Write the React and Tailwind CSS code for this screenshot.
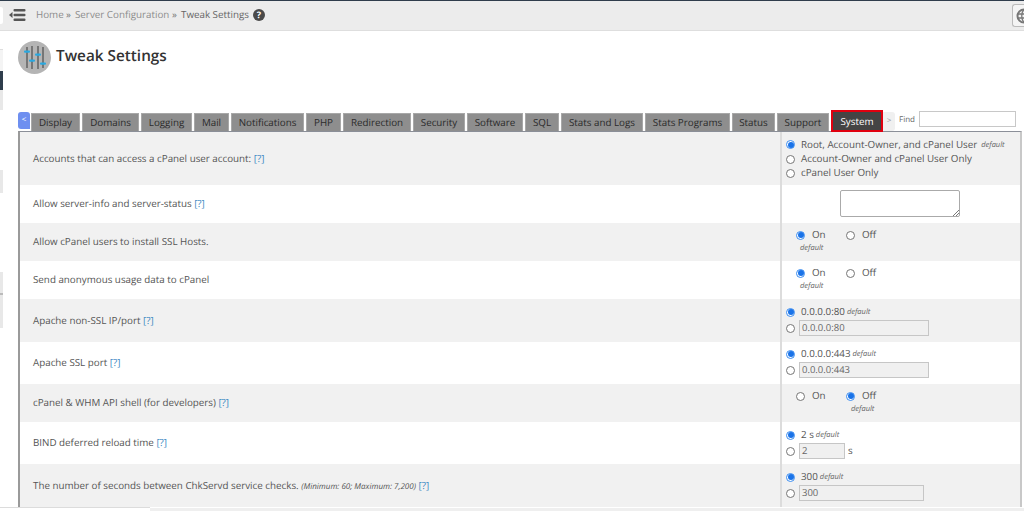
const font = { fontFamily: '"Open Sans", sans-serif' };

const tabs = [
  ["Display", "w-[49px]"],
  ["Domains", "w-[57px]"],
  ["Logging", "w-[51px]"],
  ["Mail", "w-[35px]"],
  ["Notifications", "w-[73px]"],
  ["PHP", "w-[35px]"],
  ["Redirection", "w-[68px]"],
  ["Security", "w-[52px]"],
  ["Software", "w-[56px]"],
  ["SQL", "w-[34px]"],
  ["Stats and Logs", "w-[82px]"],
  ["Stats Programs", "w-[85px]"],
  ["Status", "w-[43px]"],
  ["Support", "w-[52px]"],
];

function Radio({ on }) {
  return on ? (
    <span className="w-[9px] h-[9px] rounded-full shrink-0 border border-[#3b8df0] bg-white flex items-center justify-center">
      <span className="w-[6px] h-[6px] rounded-full bg-[#1a73e8]" />
    </span>
  ) : (
    <span className="w-[9px] h-[9px] rounded-full shrink-0 border border-[#767676] bg-white" />
  );
}

function Def({ className = "" }) {
  return <span className={`text-[7.5px] italic text-[#666] ${className}`}>default</span>;
}

function Help() {
  return <span className="text-[#3f8ac4]">[?]</span>;
}

function Row({ h, gray, label, children }) {
  return (
    <div className={`flex ${h} ${gray ? "bg-[#f1f1f1]" : "bg-white"}`}>
      <div className="w-[760px] pl-[13px] pt-px flex items-center text-[9.8px] text-[#555]">{label}</div>
      <div className="flex-1 border-l-2 border-[#dcdcdc]">{children}</div>
    </div>
  );
}

function OnOff({ off }) {
  return (
    <div className="pt-[5px] pl-[14px]">
      <div className="flex items-center h-[14px] text-[9.8px] text-[#555]">
        <Radio on={!off} />
        <span className="ml-[7px] w-[34px]">On</span>
        <Radio on={off} />
        <span className="ml-[7px]">Off</span>
      </div>
      <div className={`flex text-[7.5px] leading-[12px] ${off ? "pl-[55px]" : "pl-[4px]"}`}>
        <Def />
      </div>
    </div>
  );
}

function ValueInput({ value, width, suffix, unit, top = "pt-[6px]" }) {
  return (
    <div className={`pl-[4px] ${top} text-[9.8px] text-[#555]`}>
      <div className="flex items-center h-[14px]">
        <Radio on />
        <span className="ml-[6px]">{value}{suffix}</span>
        <Def className="ml-[2px] mt-[1px]" />
      </div>
      <div className="flex items-center mt-[1px]">
        <Radio />
        <div className={`ml-[4px] ${width} h-[16px] border border-[#c6c6c6] bg-[#f0f0f0] text-[9.5px] leading-[14px] pl-[2px] text-[#666]`}>{value}</div>
        {unit && <span className="ml-[3px]">{unit}</span>}
      </div>
    </div>
  );
}

export default function App() {
  return (
    <div style={font} className="w-[1024px] h-[511px] overflow-hidden bg-white flex flex-col [text-rendering:geometricPrecision]">
      <div className="h-px bg-[#2f3d4c] shrink-0" />
      <header className="h-[30px] shrink-0 bg-[#ececec] border-b border-[#dedede] flex items-center relative">
        <div className="w-[3px] h-[17px] bg-white rounded-r-[2px] -mt-[1px]" />
        <svg width="17" height="14" viewBox="0 0 17 14" className="ml-[6px] -mt-[1px]" fill="#555">
          <path d="M0 7l3.5-3v6z" />
          <rect x="4.5" y="1" width="12" height="2.4" rx="1" />
          <rect x="4.5" y="5.8" width="12" height="2.4" rx="1" />
          <rect x="4.5" y="10.6" width="12" height="2.4" rx="1" />
        </svg>
        <div className="ml-[10px] text-[9.8px] text-[#8c8c8c] flex items-center -mt-[1px] whitespace-nowrap">
          <span className="w-[27px]">Home</span><span className="ml-[3px] w-[5px] text-[#777]">»</span>
          <span className="ml-[4px] w-[94px]">Server Configuration</span><span className="ml-[3px] w-[5px] text-[#777]">»</span>
          <span className="ml-[4px] w-[67px] text-[#666]">Tweak Settings</span>
          <span className="ml-[5px] w-[12px] h-[12px] rounded-full bg-[#4a4a4a] text-white text-[9px] font-bold leading-[12px] text-center">?</span>
        </div>
        <div className="absolute right-0 top-[3px] w-[12px] h-[23px] border border-r-0 border-[#bbb] rounded-l-[3px] bg-[#f4f4f4] overflow-hidden pl-[3px] pt-[3px]">
          <svg width="16" height="16" viewBox="0 0 16 16" fill="none" stroke="#777" strokeWidth="2">
            <circle cx="8" cy="8" r="6.5" />
            <path d="M1 6h14M1 10h14M8 1.5c-3 3-3 10 0 13M8 1.5c3 3 3 10 0 13" strokeWidth="1.3" />
          </svg>
        </div>
      </header>

      <div className="h-[476px] shrink-0 flex">
        <aside className="w-[3px] shrink-0 flex flex-col bg-white">
          <div className="h-[19px] bg-white border-b border-[#dedede]" />
          <div className="h-[21px] bg-[#f4f4f4]" />
          <div className="h-[19px] bg-[#2f3d4c]" />
          <div className="h-[20px] bg-[#e8e8e8]" />
          <div className="h-[60px]" />
          <div className="h-[23px] bg-[#e8e8e8]" />
          <div className="h-[79px]" />
          <div className="h-[21px] bg-[#e8e8e8]" />
          <div className="h-[2px] bg-[#bbb]" />
          <div className="h-[33px] bg-[#e8e8e8]" />
        </aside>

        <main className="flex-1 min-w-0 flex flex-col">
          <div className="h-[81px] shrink-0 pl-[15px] pt-[10px] flex items-start">
            <svg width="33" height="33" viewBox="0 0 33 33">
              <circle cx="16.5" cy="16.5" r="16.5" fill="#b4b4b4" />
              <g stroke="#5c5c5c" strokeWidth="1.4">
                <path d="M9 6v21M14 5v23M20 5v23M25 6v21" />
              </g>
              <g fill="#29a8e0">
                <rect x="6" y="9.5" width="6" height="2.2" rx="1" />
                <rect x="11" y="18.5" width="6" height="2.2" rx="1" />
                <rect x="17" y="12.5" width="6" height="2.2" rx="1" />
                <rect x="22" y="21.5" width="6" height="2.2" rx="1" />
              </g>
            </svg>
            <h1 className="ml-[5px] mt-[5px] text-[15.3px] leading-[20px] font-semibold text-[#333]">Tweak Settings</h1>
          </div>

          <div className="h-[19px] shrink-0 flex items-end pl-[15px] relative">
            <div className="w-[12px] h-[17px] mb-[2px] mr-px bg-[#6e8ff0] rounded-t-[3px] rounded-bl-[3px] text-white text-[8px] leading-[16px] text-center">&lt;</div>
            {tabs.map(([t, w]) => (
              <div key={t} className={`${w} h-[18px] mr-[2px] shrink-0 bg-[#8e8e8e] border-t border-x border-[#a8a8a8] text-[#2b2b2b] text-[9.8px] leading-[18px] text-center whitespace-nowrap`}>{t}</div>
            ))}
            <div className="absolute left-[828px] top-[-2px] w-[52px] h-[22px] bg-[#444] border-2 border-[#e0000f] text-white text-[9.8px] leading-[20px] text-center">System</div>
            <div className="absolute left-[880px] top-0 w-[12px] h-[19px] bg-[#f0f0f0] rounded-r-[3px] text-[#999] text-[8px] leading-[18px] text-center">&gt;</div>
            <span className="absolute left-[896px] top-px text-[8px] leading-[14px] text-[#666]">Find</span>
            <div className="absolute left-[916px] top-[-1px] w-[97px] h-[16px] bg-white border border-[#c8c8c8]" />
          </div>

          <div className="ml-[15px] mr-[2px] flex-1 min-h-0 flex flex-col border-l-2 border-r-2 border-t border-[#8b8f98] border-l-[#9a9a9a] border-r-[#c8c8c8]">
            <Row h="h-[53px]" gray label={<span>Accounts that can access a cPanel user account: <Help /></span>}>
              <div className="pl-[4px] pt-[5px] text-[9.8px] leading-[14px] text-[#555]">
                <div className="flex items-center"><Radio on /><span className="ml-[6px]">Root, Account-Owner, and cPanel User</span><Def className="ml-[4px] mt-[1px]" /></div>
                <div className="flex items-center"><Radio /><span className="ml-[6px]">Account-Owner and cPanel User Only</span></div>
                <div className="flex items-center"><Radio /><span className="ml-[6px]">cPanel User Only</span></div>
              </div>
            </Row>
            <Row h="h-[38px]" label={<span>Allow server-info and server-status <Help /></span>}>
              <div className="ml-[58px] mt-[5px] w-[120px] h-[27px] bg-white border border-[#aaa] rounded-[2px] relative">
                <svg width="7" height="7" viewBox="0 0 7 7" className="absolute right-0 bottom-0" stroke="#555" strokeWidth="0.8"><path d="M1 7L7 1M4 7L7 4" /></svg>
              </div>
            </Row>
            <Row h="h-[38px]" gray label="Allow cPanel users to install SSL Hosts."><OnOff /></Row>
            <Row h="h-[38px]" label="Send anonymous usage data to cPanel"><OnOff /></Row>
            <Row h="h-[43px]" gray label={<span>Apache non-SSL IP/port <Help /></span>}><ValueInput value="0.0.0.0:80" width="w-[130px]" /></Row>
            <Row h="h-[42px]" label={<span>Apache SSL port <Help /></span>}><ValueInput value="0.0.0.0:443" width="w-[130px]" top="pt-[5px]" /></Row>
            <Row h="h-[38px]" gray label={<span>cPanel &amp; WHM API shell (for developers) <Help /></span>}><OnOff off /></Row>
            <Row h="h-[42px]" label={<span>BIND deferred reload time <Help /></span>}><ValueInput value="2" suffix=" s" width="w-[46px]" unit="s" /></Row>
            <Row h="h-[43px]" gray label={<span>The number of seconds between ChkServd service checks. <span className="text-[8px] italic">(Minimum: 60; Maximum: 7,200)</span> <Help /></span>}><ValueInput value="300" width="w-[125px]" /></Row>
          </div>
        </main>
      </div>
      <div className="flex-1 flex">
        <div className="w-[150px] bg-white border-t border-[#dcdcdc]" />
        <div className="flex-1 bg-[#efefef] border-t border-white" />
      </div>
    </div>
  );
}
